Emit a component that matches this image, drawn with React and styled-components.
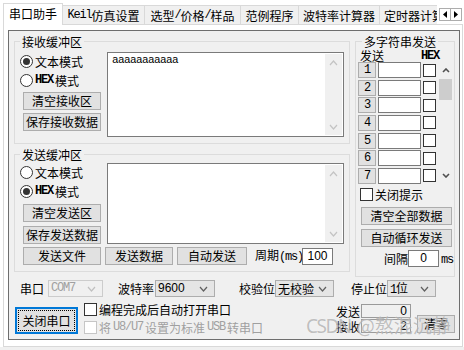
import React from 'react';
import styled, { createGlobalStyle } from 'styled-components';

const GlobalStyle = createGlobalStyle`
  html, body {
    margin: 0;
    padding: 0;
    background: #ffffff;
  }
  body {
    font-family: "Noto Sans CJK SC", "Liberation Sans", sans-serif;
    font-size: 12px;
    color: #000;
  }
  * { box-sizing: border-box; }
`;

const Window = styled.div`
  width: 464px;
  height: 350px;
  overflow: hidden;
  display: flex;
  flex-direction: column;
  background: #fff;
`;

/* ---------- tabs ---------- */

const TabStrip = styled.div`
  height: 24px;
  flex: none;
  display: flex;
  align-items: flex-start;
  padding-left: 3px;
  position: relative;
  z-index: 1;
`;

const TabList = styled.div`
  width: 434px;
  height: 25px;
  flex: none;
  display: flex;
  align-items: flex-end;
  overflow: hidden;
`;

const Tab = styled.div`
  flex: none;
  width: ${p => p.$w}px;
  height: ${p => (p.$active ? 22 : 19)}px;
  margin-right: -1px;
  margin-bottom: ${p => (p.$active ? 0 : 1)}px;
  padding-left: ${p => p.$pl || 0}px;
  border: 1px solid #d9d9d9;
  border-bottom: none;
  background: ${p => (p.$active ? '#ffffff' : '#f0f0f0')};
  display: flex;
  align-items: center;
  justify-content: ${p => (p.$pl ? 'flex-start' : 'center')};
  padding-bottom: ${p => (p.$active ? 2 : 0)}px;
  line-height: 13px;
  white-space: nowrap;
  overflow: hidden;
`;

/* the up-down control floats over the end of the tab strip */
const TabArrows = styled.div`
  position: absolute;
  right: 3px;
  top: 8px;
  display: flex;
  z-index: 3;
`;

const TabArrow = styled.div`
  width: 12px;
  height: 13px;
  border: 1px solid #adadad;
  margin-right: -1px;
  background: #fff;
  display: flex;
  align-items: center;
  justify-content: center;
`;

const TabPage = styled.div`
  flex: none;
  height: 323px;
  margin: 0 1px 0 3px;
  border: 1px solid #d9d9d9;
  background: #fff;
  padding: 5px 0 0 4px;
`;

const Footer = styled.div`
  flex: 1;
  background: #f0f0f0;
`;

/* ---------- dialog ---------- */

const Dialog = styled.div`
  width: 452px;
  height: 310px;
  border: 1px solid #6e6e6e;
  background: #f0f0f0;
  display: flex;
  flex-direction: column;
  position: relative;
`;

const TopSection = styled.div`
  display: flex;
  align-items: flex-start;
  padding-left: 5px;
`;

const LeftColumn = styled.div`
  width: 336px;
  display: flex;
  flex-direction: column;
`;

const Group = styled.fieldset`
  margin: 4px 0 0 ${p => p.$ml || 0}px;
  padding: ${p => p.$pad};
  width: ${p => p.$w}px;
  border: 1px solid #dcdcdc;
  min-width: 0;
`;

const Legend = styled.legend`
  padding: 0 2px;
  margin-left: ${p => p.$offset || 0}px;
  font-size: 12px;
  line-height: 13px;
  height: 13px;
`;

const Mono = styled.span`
  font-family: "Liberation Mono", "DejaVu Sans Mono", monospace;
  font-size: 12px;
  letter-spacing: -1.2px;
  font-weight: ${p => (p.$bold ? 700 : 400)};
`;

const BufferRow = styled.div`
  display: flex;
  align-items: flex-start;
`;

const ModeColumn = styled.div`
  width: 87px;
  flex: none;
  display: flex;
  flex-direction: column;
`;

const OptionRow = styled.div`
  height: ${p => p.$h || 19}px;
  display: flex;
  align-items: center;
  gap: 2px;
  line-height: 13px;
  white-space: nowrap;
  color: ${p => (p.$disabled ? '#a0a0a0' : '#000')};
`;

const Radio = styled.span`
  width: 13px;
  height: 13px;
  flex: none;
  border-radius: 50%;
  border: 1px solid #333;
  background: #fff;
  display: flex;
  align-items: center;
  justify-content: center;
  &::after {
    content: '';
    width: 7px;
    height: 7px;
    border-radius: 50%;
    background: #333;
    display: ${p => (p.$checked ? 'block' : 'none')};
  }
`;

const Check = styled.span`
  width: 13px;
  height: 13px;
  flex: none;
  border: 1px solid ${p => (p.$disabled ? '#c6c6c6' : '#333')};
  background: #fff;
`;

const Button = styled.button`
  width: ${p => p.$w}px;
  height: ${p => p.$h || 18}px;
  flex: none;
  margin: ${p => p.$m || '0'};
  padding: 0;
  background: #e1e1e1;
  border: 1px solid #adadad;
  font: inherit;
  font-size: 12px;
  line-height: 12px;
  color: #000;
  display: flex;
  align-items: center;
  justify-content: center;
  white-space: nowrap;
`;

const DefaultButton = styled(Button)`
  border: 2px solid #0078d7;
  outline: 1px dotted #000;
  outline-offset: -4px;
`;

const TextBox = styled.div`
  width: ${p => p.$w}px;
  height: ${p => p.$h}px;
  flex: none;
  border: 1px solid #7a7a7a;
  background: #fff;
  display: flex;
`;

const TextContent = styled.div`
  flex: 1;
  padding: 1px 4px;
  font-family: "Liberation Mono", monospace;
  font-size: 11px;
  letter-spacing: -0.6px;
  line-height: 13px;
`;

const VScroll = styled.div`
  width: ${p => p.$w || 17}px;
  flex: none;
  margin: ${p => p.$m || '0'};
  height: ${p => (p.$h ? `${p.$h}px` : 'auto')};
  background: #f0f0f0;
  display: flex;
  flex-direction: column;
  align-items: center;
`;

const ScrollArrow = styled.div`
  height: ${p => p.$h || 16}px;
  width: 100%;
  flex: none;
  display: flex;
  align-items: center;
  justify-content: center;
`;

const ScrollTrack = styled.div`
  flex: 1;
  width: 100%;
`;

const Thumb = styled.div`
  width: 13px;
  height: 21px;
  background: #cdcdcd;
  flex: none;
`;

const ButtonRow = styled.div`
  display: flex;
  align-items: center;
  gap: 4px;
  margin: 3px 0 0 3px;
  height: 18px;
`;

const Label = styled.span`
  flex: none;
  width: ${p => (p.$w ? `${p.$w}px` : 'auto')};
  margin-left: ${p => p.$ml || 0}px;
  line-height: 13px;
  white-space: nowrap;
  text-align: ${p => p.$align || 'left'};
`;

const Field = styled.div`
  width: ${p => p.$w}px;
  height: ${p => p.$h || 17}px;
  flex: none;
  margin-left: ${p => p.$ml || 0}px;
  border: 1px solid ${p => (p.$readonly ? '#9a9a9a' : '#7a7a7a')};
  background: ${p => (p.$readonly ? '#f0f0f0' : '#fff')};
  font-family: "Liberation Sans", sans-serif;
  font-size: 12px;
  line-height: 13px;
  display: flex;
  align-items: center;
  justify-content: ${p => p.$justify || 'center'};
  padding: 0 3px;
`;

/* ---------- multi string group ---------- */

const StringHeader = styled.div`
  height: 14px;
  display: flex;
  align-items: center;
  padding-left: 2px;
  line-height: 13px;
`;

const StringArea = styled.div`
  display: flex;
  align-items: flex-start;
  gap: 2px;
`;

const StringRows = styled.div`
  display: grid;
  grid-template-columns: 18px 43px 13px;
  grid-auto-rows: 16px;
  column-gap: 2px;
  row-gap: 1.67px;
  align-items: center;
`;

const NumButton = styled(Button)`
  width: 18px;
  height: 16px;
`;

const StringInput = styled.div`
  height: 16px;
  border: 1px solid #7a7a7a;
  background: #fff;
`;

const RightStack = styled.div`
  display: flex;
  flex-direction: column;
`;

const IntervalRow = styled.div`
  display: flex;
  align-items: center;
  margin: 3px 0 0 26px;
  height: 17px;
`;

/* ---------- bottom ---------- */

const PortRow = styled.div`
  display: flex;
  align-items: center;
  height: 17px;
  margin-top: 3px;
  padding-left: 11px;
`;

const Combo = styled.div`
  width: ${p => p.$w}px;
  height: 17px;
  flex: none;
  margin-left: ${p => p.$ml || 0}px;
  border: 1px solid ${p => (p.$disabled ? '#cccccc' : '#adadad')};
  background: ${p => (p.$disabled ? '#f0f0f0' : '#e5e5e5')};
  color: ${p => (p.$disabled ? '#a0a0a0' : '#000')};
  display: flex;
  align-items: center;
  justify-content: space-between;
  padding: 0 6px 0 2px;
  line-height: 13px;
  white-space: nowrap;
`;

const SansText = styled.span`
  font-family: "Liberation Sans", sans-serif;
  font-size: 12px;
`;

const ControlRow = styled.div`
  display: flex;
  align-items: flex-start;
  margin-top: 3px;
  padding-left: 6px;
  padding-right: 4px;
`;

const OptionColumn = styled.div`
  display: flex;
  flex-direction: column;
  gap: 5px;
  margin: 3px 0 0 6px;
`;

const Spacer = styled.div`
  flex: 1;
`;

const Counters = styled.div`
  display: grid;
  grid-template-columns: 25px 50px;
  row-gap: 1px;
  align-items: center;
  margin-top: 4px;
`;

const Watermark = styled.div`
  position: absolute;
  left: 297px;
  top: 283px;
  font-size: 19px;
  line-height: 22px;
  color: rgba(140, 140, 140, 0.55);
  text-shadow: 0 0 1px rgba(255, 255, 255, 0.7);
  white-space: nowrap;
  pointer-events: none;
`;

const WatermarkLatin = styled.span`
  font-family: "Noto Sans", sans-serif;
  letter-spacing: -1.5px;
  margin-right: 6px;
`;

/* ---------- icons ---------- */

const Chevron = ({ up, color = '#606060', w = 7, h = 4, sw = 1.2 }) => (
  <svg width={w + 2} height={h + 2} viewBox={`0 0 ${w + 2} ${h + 2}`}>
    <polyline
      points={up ? `1,${h + 1} ${w / 2 + 1},1 ${w + 1},${h + 1}` : `1,1 ${w / 2 + 1},${h + 1} ${w + 1},1`}
      fill="none"
      stroke={color}
      strokeWidth={sw}
    />
  </svg>
);

const Triangle = ({ left }) => (
  <svg width="4" height="7" viewBox="0 0 4 7">
    <polygon points={left ? '4,0 0,3.5 4,7' : '0,0 4,3.5 0,7'} fill="#000" />
  </svg>
);

const EditScroll = () => (
  <VScroll $m="1px 1px 1px 0">
    <ScrollArrow $h={17}><Chevron up color="#c4c4c4" /></ScrollArrow>
    <ScrollTrack />
    <ScrollArrow $h={17}><Chevron color="#c4c4c4" /></ScrollArrow>
  </VScroll>
);

const Slash = () => <Mono>/</Mono>;

const tabs = [
  { key: 'a', w: 60, active: true, label: '串口助手' },
  { key: 'b', w: 83, label: <><Mono>Keil</Mono>仿真设置</> },
  { key: 'c', w: 97, label: <>选型<Slash />价格<Slash />样品</> },
  { key: 'd', w: 59, label: '范例程序' },
  { key: 'e', w: 82, label: '波特率计算器' },
  { key: 'f', w: 80, pl: 4, label: '定时器计算器' },
];

export default function App() {
  return (
    <Window>
      <GlobalStyle />
      <TabStrip>
        <TabList>
          {tabs.map(t => (
            <Tab key={t.key} $w={t.w} $active={t.active} $pl={t.pl}>{t.label}</Tab>
          ))}
        </TabList>
        <TabArrows>
          <TabArrow><Triangle left /></TabArrow>
          <TabArrow><Triangle /></TabArrow>
        </TabArrows>
      </TabStrip>

      <TabPage>
        <Dialog>
          <TopSection>
            <LeftColumn>
              <Group $w={336} $pad="4px 5px 6px 5px">
                <Legend>接收缓冲区</Legend>
                <BufferRow>
                  <ModeColumn>
                    <OptionRow><Radio $checked />文本模式</OptionRow>
                    <OptionRow><Radio /><Mono $bold>HEX</Mono>模式</OptionRow>
                    <Button $w={78} $m="2px 0 0 3px">清空接收区</Button>
                    <Button $w={78} $m="3px 0 0 3px">保存接收数据</Button>
                  </ModeColumn>
                  <TextBox $w={237} $h={85}>
                    <TextContent>aaaaaaaaaaa</TextContent>
                    <EditScroll />
                  </TextBox>
                </BufferRow>
              </Group>

              <Group $w={336} $pad="2px 5px 6px 5px">
                <Legend>发送缓冲区</Legend>
                <BufferRow>
                  <ModeColumn>
                    <OptionRow><Radio />文本模式</OptionRow>
                    <OptionRow><Radio $checked /><Mono $bold>HEX</Mono>模式</OptionRow>
                    <Button $w={78} $m="3px 0 0 3px">清空发送区</Button>
                    <Button $w={78} $m="4px 0 0 3px">保存发送数据</Button>
                  </ModeColumn>
                  <TextBox $w={237} $h={81}>
                    <TextContent />
                    <EditScroll />
                  </TextBox>
                </BufferRow>
                <ButtonRow>
                  <Button $w={78}>发送文件</Button>
                  <Button $w={68}>发送数据</Button>
                  <Button $w={70}>自动发送</Button>
                  <Label $ml={4}>周期<Mono>(ms)</Mono></Label>
                  <Field $w={31} $ml={-5}>100</Field>
                </ButtonRow>
              </Group>
            </LeftColumn>

            <Group $w={100} $ml={5} $pad="0 0 9px 2px">
              <Legend $offset={4}>多字符串发送</Legend>
              <StringHeader>
                发送<Label $ml={37}><Mono $bold>HEX</Mono></Label>
              </StringHeader>
              <StringArea>
                <StringRows>
                  {[1, 2, 3, 4, 5, 6, 7].map(n => (
                    <React.Fragment key={n}>
                      <NumButton $w={18}><Mono>{n}</Mono></NumButton>
                      <StringInput />
                      <Check />
                    </React.Fragment>
                  ))}
                </StringRows>
                <VScroll $w={15} $h={122}>
                  <ScrollArrow $h={17}><Chevron up color="#505050" w={6} h={3} sw={1.6} /></ScrollArrow>
                  <Thumb />
                  <ScrollTrack />
                  <ScrollArrow $h={17}><Chevron color="#505050" w={6} h={3} sw={1.6} /></ScrollArrow>
                </VScroll>
              </StringArea>
              <RightStack>
                <OptionRow $h={13} style={{ marginTop: 4, paddingLeft: 2 }}><Check />关闭提示</OptionRow>
                <Button $w={91} $m="6px 0 0 3px">清空全部数据</Button>
                <Button $w={91} $m="4px 0 0 3px">自动循环发送</Button>
                <IntervalRow>
                  <Label $w={24}>间隔</Label>
                  <Field $w={31}>0</Field>
                  <Label $ml={2}><Mono>ms</Mono></Label>
                </IntervalRow>
              </RightStack>
            </Group>
          </TopSection>

          <PortRow>
            <Label $w={24}>串口</Label>
            <Combo $w={55} $ml={4} $disabled>
              <Mono>COM7</Mono>
              <Chevron color="#c0c0c0" />
            </Combo>
            <Label $w={36} $ml={15}>波特率</Label>
            <Combo $w={60} $ml={1}>
              <SansText>9600</SansText>
              <Chevron />
            </Combo>
            <Label $w={36} $ml={24}>校验位</Label>
            <Combo $w={59}>
              <span>无校验</span>
              <Chevron />
            </Combo>
            <Label $w={36} $ml={17}>停止位</Label>
            <Combo $w={49}>
              <span><Mono>1</Mono>位</span>
              <Chevron />
            </Combo>
          </PortRow>

          <ControlRow>
            <DefaultButton $w={63} $h={27} $m="7px 0 0 0">关闭串口</DefaultButton>
            <OptionColumn>
              <OptionRow $h={13}><Check />编程完成后自动打开串口</OptionRow>
              <OptionRow $h={13} $disabled>
                <Check $disabled />将<Mono>U8/U7</Mono>设置为标准<Mono>USB</Mono>转串口
              </OptionRow>
            </OptionColumn>
            <Spacer />
            <Counters>
              <Label>发送</Label>
              <Field $w={50} $h={14} $readonly $justify="flex-end">0</Field>
              <Label>接收</Label>
              <Field $w={50} $h={14} $readonly $justify="flex-end">2</Field>
            </Counters>
            <Button $w={38} $m="15px 0 0 6px">清零</Button>
          </ControlRow>

          <Watermark>
            <WatermarkLatin>CSDN</WatermarkLatin>@熬混沉静
          </Watermark>
        </Dialog>
      </TabPage>
      <Footer />
    </Window>
  );
}
